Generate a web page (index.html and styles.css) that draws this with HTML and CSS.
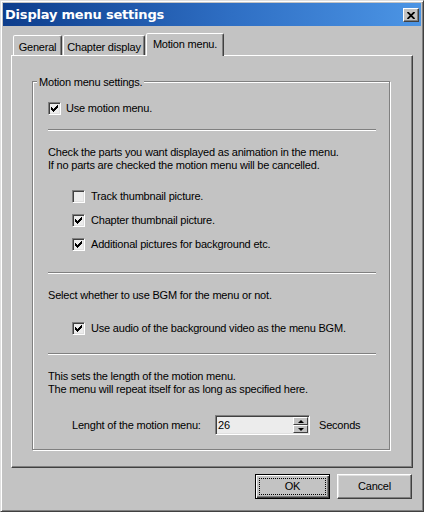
FILE: index.html
```html
<!DOCTYPE html>
<html>
<head>
<meta charset="utf-8">
<title>Display menu settings</title>
<link rel="stylesheet" href="styles.css">
</head>
<body>
<div class="window">
  <div class="titlebar">
    <span class="title">Display menu settings</span>
    <span class="close"><svg width="8" height="7" viewBox="0 0 8 7"><path d="M0.5 0 L7.5 7 M7.5 0 L0.5 7" stroke="#000" stroke-width="1.8"/></svg></span>
  </div>
  <div class="tabs">
    <div class="tab t-general">General</div>
    <div class="tab t-chapter">Chapter display</div>
    <div class="tab t-motion">Motion menu.</div>
  </div>
  <div class="panel">
    <div class="group">
      <div class="legend">Motion menu settings.</div>
      <div class="row r-use"><span class="cb"><svg class="chk" width="7" height="7" viewBox="0 0 7 7"><path d="M0 2h1v3h-1z M1 3h1v3h-1z M2 4h1v3h-1z M3 3h1v3h-1z M4 2h1v3h-1z M5 1h1v3h-1z M6 0h1v3h-1z" fill="#000"/></svg></span><span>Use motion menu.</span></div>
      <div class="sep s1"></div>
      <p class="note n1">Check the parts you want displayed as animation in the menu.<br>If no parts are checked the motion menu will be cancelled.</p>
      <div class="row ind r-track"><span class="cb"></span><span>Track thumbnail picture.</span></div>
      <div class="row ind r-chapter"><span class="cb"><svg class="chk" width="7" height="7" viewBox="0 0 7 7"><path d="M0 2h1v3h-1z M1 3h1v3h-1z M2 4h1v3h-1z M3 3h1v3h-1z M4 2h1v3h-1z M5 1h1v3h-1z M6 0h1v3h-1z" fill="#000"/></svg></span><span>Chapter thumbnail picture.</span></div>
      <div class="row ind r-add"><span class="cb"><svg class="chk" width="7" height="7" viewBox="0 0 7 7"><path d="M0 2h1v3h-1z M1 3h1v3h-1z M2 4h1v3h-1z M3 3h1v3h-1z M4 2h1v3h-1z M5 1h1v3h-1z M6 0h1v3h-1z" fill="#000"/></svg></span><span>Additional pictures for background etc.</span></div>
      <div class="sep s2"></div>
      <p class="note n2">Select whether to use BGM for the menu or not.</p>
      <div class="row ind r-audio"><span class="cb"><svg class="chk" width="7" height="7" viewBox="0 0 7 7"><path d="M0 2h1v3h-1z M1 3h1v3h-1z M2 4h1v3h-1z M3 3h1v3h-1z M4 2h1v3h-1z M5 1h1v3h-1z M6 0h1v3h-1z" fill="#000"/></svg></span><span>Use audio of the background video as the menu BGM.</span></div>
      <div class="sep s3"></div>
      <p class="note n3">This sets the length of the motion menu.<br>The menu will repeat itself for as long as specified here.</p>
      <div class="len">
        <span class="len-label">Lenght of the motion menu:</span>
        <div class="edit">
          <span class="val">26</span>
          <span class="spin"><span class="sb up"><i></i></span><span class="sb down"><i></i></span></span>
        </div>
        <span class="unit">Seconds</span>
      </div>
    </div>
  </div>
  <div class="buttons">
    <div class="btn default"><span class="focus">OK</span></div>
    <div class="btn">Cancel</div>
  </div>
</div>
</body>
</html>
```
FILE: styles.css
```css
html, body {
  margin: 0;
  padding: 0;
  background: #c3c3c3;
}

.window {
  width: 424px;
  height: 512px;
  box-sizing: border-box;
  background: #c3c3c3;
  border: 1px solid;
  border-color: #dfdfdf #404040 #404040 #dfdfdf;
  box-shadow: inset 1px 1px #fff, inset -1px -1px #808080;
  padding: 2px;
  display: flex;
  flex-direction: column;
  font-family: "Liberation Sans", Arial, sans-serif;
  font-size: 11px;
  letter-spacing: -0.2px;
  color: #000;
}

.titlebar {
  height: 23px;
  flex: none;
  display: flex;
  align-items: center;
  justify-content: space-between;
  padding: 0 2px 0 2px;
  background: linear-gradient(to right, #0d3d8c, #2f6fc4 55%, #4c95e5);
}

.title {
  font-family: "DejaVu Sans", Verdana, sans-serif;
  font-weight: bold;
  font-size: 13px;
  letter-spacing: -0.2px;
  color: #fff;
  line-height: 16px;
}

.close {
  width: 16px;
  height: 14px;
  box-sizing: border-box;
  background: #c3c3c3;
  border: 1px solid;
  border-color: #fff #404040 #404040 #fff;
  box-shadow: inset -1px -1px #808080;
  display: flex;
  align-items: center;
  justify-content: center;
  margin-top: 1px;
}

.tabs {
  flex: none;
  display: flex;
  align-items: flex-end;
  height: 22px;
  margin-top: 7px;
  padding-left: 8px;
}

.tab {
  height: 20px;
  box-sizing: border-box;
  border: 1px solid;
  border-bottom: none;
  border-color: #fff #404040 transparent #fff;
  box-shadow: inset -1px 0 #808080;
  border-radius: 2px 2px 0 0;
  text-align: center;
  padding-top: 5px;
  line-height: 13px;
  background: #c3c3c3;
}

.t-general {
  width: 49px;
  margin-left: 2px;
}

.t-chapter {
  width: 82px;
  margin-left: 1px;
}

.t-motion {
  width: 78px;
  margin-left: 1px;
  height: 23px;
  margin-bottom: -1px;
  padding-top: 4px;
  position: relative;
  z-index: 1;
}

.panel {
  flex: none;
  height: 413px;
  box-sizing: border-box;
  margin: 0 8px;
  border: 1px solid;
  border-color: #fff #404040 #404040 #fff;
  box-shadow: inset -1px -1px #808080;
  padding: 25px 0 0 20px;
}

.group {
  width: 358px;
  box-sizing: border-box;
  border: 1px solid #808080;
  box-shadow: inset 1px 1px #fff, 1px 1px #fff;
  display: flex;
  flex-direction: column;
  align-items: flex-start;
  padding: 0 13px 14px 15px;
}

.legend {
  margin: -6px 0 0 -11px;
  padding: 0 2px;
  line-height: 13px;
  background: #c3c3c3;
}

.row {
  display: flex;
  align-items: center;
  height: 13px;
  gap: 6px;
  line-height: 13px;
  white-space: nowrap;
}

.ind {
  margin-left: 24px;
}

.r-use { margin-top: 13px; gap: 5px; }
.r-track { margin-top: 18px; }
.r-chapter { margin-top: 11px; }
.r-add { margin-top: 11px; }
.r-audio { margin-top: 20px; }

.cb {
  width: 13px;
  height: 13px;
  box-sizing: border-box;
  flex: none;
  border: 1px solid;
  border-color: #808080 #fff #fff #808080;
  box-shadow: inset 1px 1px #404040, inset -1px -1px #dfdfdf;
  background: #ececec;
}

.chk {
  display: block;
  margin: 2px 0 0 2px;
  shape-rendering: crispEdges;
}

.sep {
  align-self: stretch;
  height: 0;
  border-top: 1px solid #808080;
  border-bottom: 1px solid #fff;
}

.s1 { margin-top: 14px; }
.s2 { margin-top: 21px; }
.s3 { margin-top: 18px; }

.note {
  margin: 15px 0 0 0;
  line-height: 13px;
  white-space: nowrap;
}

.len {
  display: flex;
  align-items: center;
  height: 20px;
  margin: 19px 0 0 24px;
  white-space: nowrap;
}

.len-label {
  width: 143px;
  flex: none;
}

.edit {
  width: 95px;
  height: 20px;
  box-sizing: border-box;
  flex: none;
  border: 1px solid;
  border-color: #808080 #fff #fff #808080;
  box-shadow: inset 1px 1px #404040, inset -1px -1px #dfdfdf;
  background: #ececec;
  display: flex;
  align-items: center;
  justify-content: space-between;
  padding: 1px 1px 1px 2px;
}

.val {
  line-height: 13px;
}

.spin {
  width: 15px;
  height: 16px;
  display: flex;
  flex-direction: column;
}

.sb {
  flex: 1;
  box-sizing: border-box;
  background: #c3c3c3;
  border: 1px solid;
  border-color: #fff #404040 #404040 #fff;
  display: flex;
  align-items: center;
  justify-content: center;
}

.sb i {
  width: 0;
  height: 0;
  border-left: 3px solid transparent;
  border-right: 3px solid transparent;
}

.up i {
  border-bottom: 3px solid #000;
}

.down i {
  border-top: 3px solid #000;
}

.unit {
  margin-left: 9px;
}

.buttons {
  flex: none;
  display: flex;
  justify-content: flex-end;
  gap: 7px;
  margin-top: 6px;
  padding-right: 9px;
}

.btn {
  width: 75px;
  height: 25px;
  box-sizing: border-box;
  border: 1px solid;
  border-color: #fff #404040 #404040 #fff;
  box-shadow: inset -1px -1px #808080, inset 1px 1px #dfdfdf;
  display: flex;
  align-items: center;
  justify-content: center;
  font-size: 11px;
  line-height: 13px;
}

.btn.default {
  border-color: #000;
  box-shadow: inset 1px 1px #fff, inset -1px -1px #404040, inset -2px -2px #808080;
  padding: 3px;
}

.focus {
  flex: 1;
  align-self: stretch;
  border: 1px dotted #000;
  display: flex;
  align-items: center;
  justify-content: center;
}
```
